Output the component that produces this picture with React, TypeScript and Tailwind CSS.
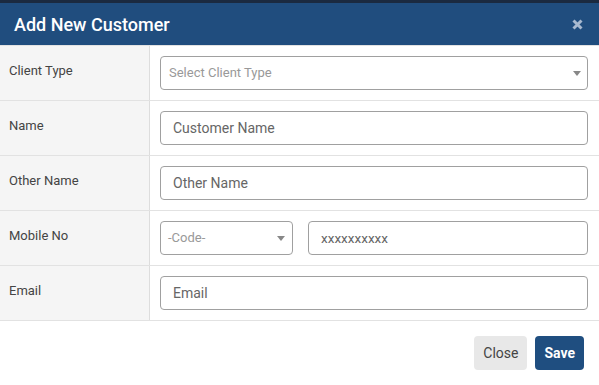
import React from 'react';

const labelCell = 'bg-[#f5f5f5] border-r border-[#dddddd] pl-[9px] pt-[15px] text-[13px] text-[#444444]';
const fieldBox = 'h-[34px] rounded-[4px] border border-[#a0a0a0] bg-white flex items-center';

function Caret() {
  return (
    <svg width="8" height="5" viewBox="0 0 8 5" className="shrink-0">
      <path d="M0 0 H8 L4 5 Z" fill="#888888" />
    </svg>
  );
}

function Row({ label, children }: { label: string; children: React.ReactNode }) {
  return (
    <div className="grid grid-cols-[150px_1fr] h-[55px] border-b border-[#e2e2e2]">
      <div className={labelCell}>{label}</div>
      <div className="pl-[10px] pr-[11px] pt-[10px]">{children}</div>
    </div>
  );
}

export default function App() {
  return (
    <div className="w-[599px] h-[385px] bg-white overflow-hidden" style={{ fontFamily: 'Roboto, "Liberation Sans", sans-serif' }}>
      <div className="h-[3px] bg-[#1b2a40]" />
      <div className="h-[43px] bg-[#204d7e] flex items-center justify-between pl-[14px] pr-[16px] border-b border-[#e2e2e2]">
        <h1 className="text-white text-[18px] font-medium">Add New Customer</h1>
        <svg width="11" height="11" viewBox="0 0 11 11">
          <path d="M1.5 1.5 L9.5 9.5 M9.5 1.5 L1.5 9.5" stroke="#a8b9cf" strokeWidth="3" />
        </svg>
      </div>

      <Row label="Client Type">
        <div className={`${fieldBox} pl-[8px] pr-[6px] justify-between`}>
          <span className="text-[13px] text-[#999999]">Select Client Type</span>
          <Caret />
        </div>
      </Row>
      <Row label="Name">
        <div className={`${fieldBox} pl-[12px]`}>
          <span className="text-[14px] text-[#666666]">Customer Name</span>
        </div>
      </Row>
      <Row label="Other Name">
        <div className={`${fieldBox} pl-[12px]`}>
          <span className="text-[14px] text-[#666666]">Other Name</span>
        </div>
      </Row>
      <Row label="Mobile No">
        <div className="flex gap-[15px]">
          <div className={`${fieldBox} w-[133px] pl-[7px] pr-[7px] justify-between`}>
            <span className="text-[13px] text-[#999999]">-Code-</span>
            <Caret />
          </div>
          <div className={`${fieldBox} flex-1 pl-[12px]`}>
            <span className="text-[13.5px] text-[#666666]">xxxxxxxxxx</span>
          </div>
        </div>
      </Row>
      <Row label="Email">
        <div className={`${fieldBox} pl-[12px]`}>
          <span className="text-[14px] text-[#666666]">Email</span>
        </div>
      </Row>

      <div className="flex justify-end gap-[8px] pr-[15px] pt-[15px]">
        <button className="h-[34px] px-[9px] rounded-[4px] bg-[#e8e8e8] text-[14px] text-[#444444]">Close</button>
        <button className="h-[34px] px-[9px] rounded-[4px] bg-[#1f4e80] text-[14px] font-bold text-white">Save</button>
      </div>
    </div>
  );
}
